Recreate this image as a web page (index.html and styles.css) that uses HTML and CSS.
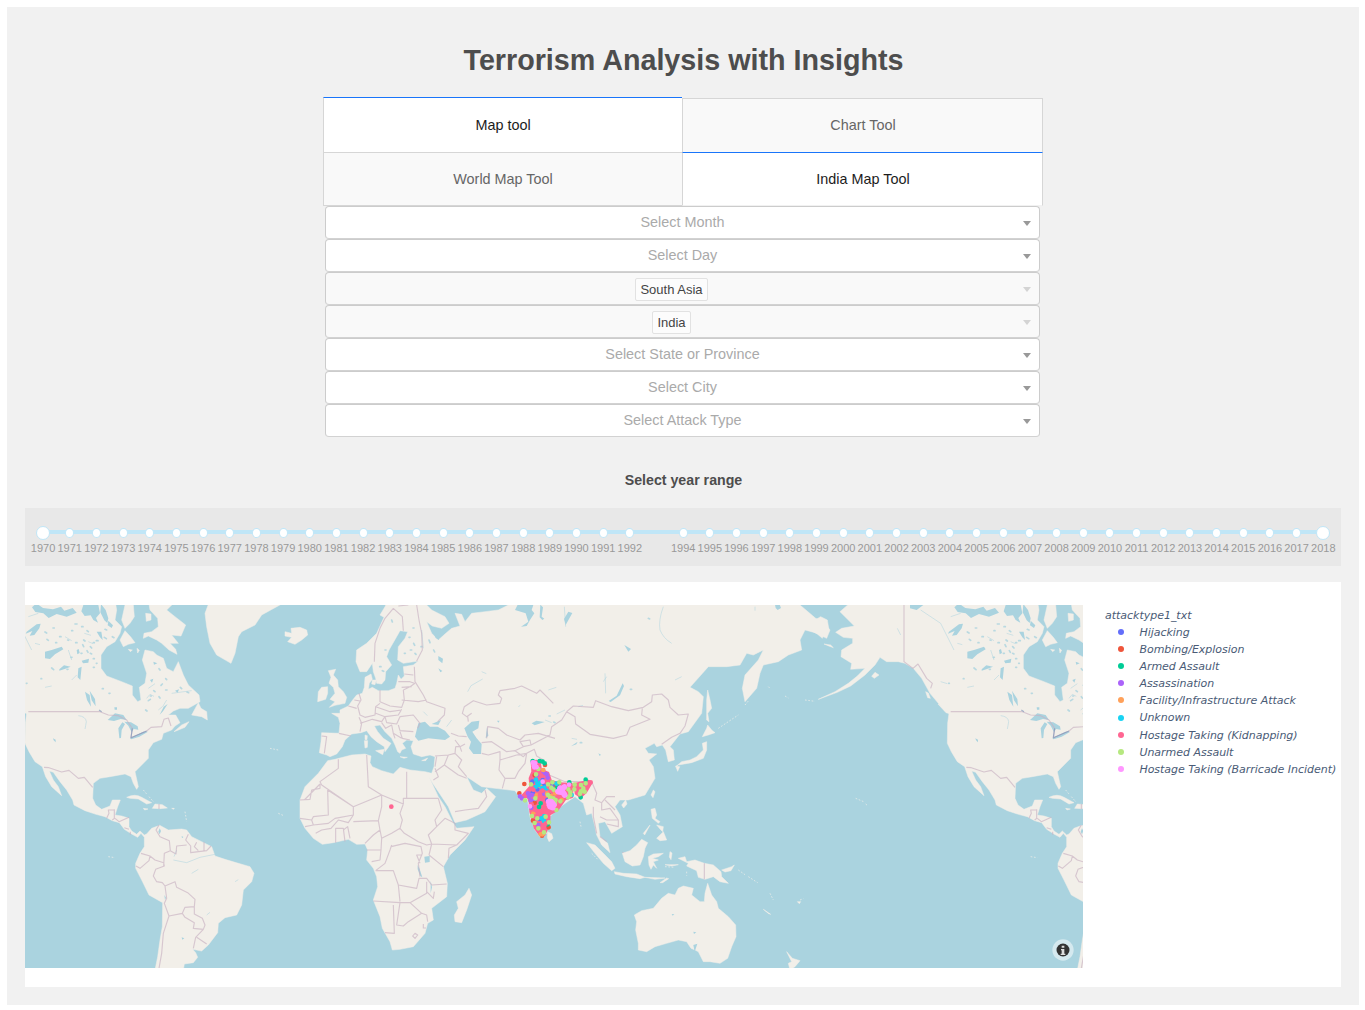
FILE: index.html
```html
<!DOCTYPE html>
<html lang="en">
<head>
<meta charset="utf-8">
<title>Terrorism Analysis with Insights</title>
<link rel="stylesheet" href="styles.css">
</head>
<body>
<main class="page">
  <h1 class="title">Terrorism Analysis with Insights</h1>
  <section class="controls">
    <nav class="tabs">
      <a class="tab selected">Map tool</a><a class="tab">Chart Tool</a>
    </nav>
    <nav class="tabs sub">
      <a class="tab">World Map Tool</a><a class="tab selected">India Map Tool</a>
    </nav>
    <div class="filters">
      <div class="select"><span class="ph">Select Month</span><i class="arrow"></i></div>
      <div class="select"><span class="ph">Select Day</span><i class="arrow"></i></div>
      <div class="select disabled"><span class="chip">South Asia</span><i class="arrow"></i></div>
      <div class="select disabled"><span class="chip">India</span><i class="arrow"></i></div>
      <div class="select"><span class="ph">Select State or Province</span><i class="arrow"></i></div>
      <div class="select"><span class="ph">Select City</span><i class="arrow"></i></div>
      <div class="select"><span class="ph">Select Attack Type</span><i class="arrow"></i></div>
    </div>
  </section>
  <h2 class="range-title">Select year range</h2>
  <div class="slider">
    <div class="mark handle">1970</div><div class="mark">1971</div><div class="mark">1972</div><div class="mark">1973</div><div class="mark">1974</div><div class="mark">1975</div><div class="mark">1976</div><div class="mark">1977</div><div class="mark">1978</div><div class="mark">1979</div>
    <div class="mark">1980</div><div class="mark">1981</div><div class="mark">1982</div><div class="mark">1983</div><div class="mark">1984</div><div class="mark">1985</div><div class="mark">1986</div><div class="mark">1987</div><div class="mark">1988</div><div class="mark">1989</div>
    <div class="mark">1990</div><div class="mark">1991</div><div class="mark">1992</div><div class="gap"></div><div class="mark">1994</div><div class="mark">1995</div><div class="mark">1996</div><div class="mark">1997</div><div class="mark">1998</div><div class="mark">1999</div>
    <div class="mark">2000</div><div class="mark">2001</div><div class="mark">2002</div><div class="mark">2003</div><div class="mark">2004</div><div class="mark">2005</div><div class="mark">2006</div><div class="mark">2007</div><div class="mark">2008</div><div class="mark">2009</div>
    <div class="mark">2010</div><div class="mark">2011</div><div class="mark">2012</div><div class="mark">2013</div><div class="mark">2014</div><div class="mark">2015</div><div class="mark">2016</div><div class="mark">2017</div><div class="mark handle">2018</div>
  </div>
  <section class="graph">
    <svg class="map" viewBox="0 15 3174 1089" preserveAspectRatio="none">
      <defs>
        <g id="americas">
          <path class="land" d="M-299 0L-299 15-322 35-297 60-279 78-317 85-335 97-312 112-284 115-284 130-317 150-319 170-287 190-290 208-247 205-270 228-297 250-337 275-387 298-330 277-290 258-247 225-217 195-202 172-182 185-147 185-127 190-102 205-77 235-52 280-27 310 5 340 1 370 0 430 12 455 30 485 52 500 62 530 80 560 110 587 100 560 85 540 73 513 85 517 105 545 125 570 143 600 147 615 180 632 213 643 240 650 262 662 283 668 298 688 320 702 338 712 348 700 358 712 358 740 345 760 332 790 332 805 350 840 372 885 413 908 412 980 405 1020 398 1070 390 1110 475 1110 478 1092 505 1088 518 1072 512 1058 503 1048 530 1053 550 1035 578 998 580 970 600 953 635 945 650 915 655 870 680 845 687 820 675 800 640 790 600 778 570 768 560 740 530 725 500 710 485 690 470 687 430 690 404 676 380 685 365 702 358 705 345 693 335 703 320 693 312 680 312 655 290 648 270 645 278 620 286 600 262 600 255 618 230 628 212 615 203 595 205 550 225 535 255 530 300 522 318 530 325 550 335 568 340 560 330 515 350 495 370 475 370 450 385 428 410 418 415 400 440 390 450 378 465 368 452 345 430 345 445 333 465 325 490 325 525 305 522 285 490 255 475 225 460 185 445 215 425 205 415 175 395 165 385 155 360 150 352 180 365 220 360 250 343 262 348 300 338 305 322 285 322 258 290 245 245 228 228 205 228 165 245 140 270 125 285 100 290 80 270 60 275 30 270 0Z"/>
          <path class="land" d="M355 115L370 108 395 120 410 130 432 150 456 163 452 148 435 130 460 130 440 105 468 108 482 75 450 50 425 30 440 15 370 0 375 30 398 55 400 80 380 95 357 100ZM285 120L300 92 318 112 330 128 310 133 295 140ZM300 15L325 15 328 50 315 70 300 85 290 60ZM362 40l16 2 0 18-14 4zM310 148l12 2-6 5zM336 145l7 6-5 8zM500 345L520 308 528 325 545 335 547 360 530 350ZM447 395L470 375 492 365 480 382 455 392ZM305 592Q330 580 350 592L380 608 365 612 340 597 315 595ZM382 625L390 612 412 614 427 624 405 626ZM355 625l14 2-10 3zM440 625l8 0-2 3zM555 0L540 40 545 80 555 130 575 165 618 190 630 160 640 110 650 95 690 75 710 45 770 12 780 0ZM-65 275l8 4 6 16-8-2zM-28 312l20 8 18 22-14-4zM-205 225l-12-8-10 12 8 6zM-370 132l20 3 8 8-16-6zM-360 60L-380 50-397 60-415 88-390 102-375 115-367 95-355 90Z"/>
          <g class="lake">
            <path d="M60 155l20-5 30-10 5 8-25 15-15 14-15-2zM5 95l30-22 12-2-4 14-15 20-14 2 8-14-20 8zM103 208l14-12 20 4-16 6-18 6zM180 275l14 10 4 35-12-20zM194 272l16 25 2 22-12-18zM248 360l22-20 25 5 10 15-18-3-20 6zM283 415l-3-30 12-18 8 5-10 18-2 24zM298 365l20 2 20 12 2 10-14-2-6 10-10-20zM315 415l40-20 14 0-26 15-24 8zM268 322l8 0 0 7-7 0zM84 415l8 4 0 8-6-6zM160 205l10-5-4 40-8-8zM155 150l6-3 3 12-7 4zM170 182l22-6-2 12-16 2zM215 95l14 0 4 25-8-8zM34 10l20 14 30 4 24-8 10 12 25-8 12 14-30 12-30-8-24 12-16-14-24-4-10-14zM175 15l45 0 5 25-12 14 6 14-14-8-8-14-18 2-10-14zM228 12l14 18 8 25 -3 14-9-8-12-24zM250 62l14 14-4 8-12-8zM340 240l8-5-2 14zM450 272l12-4-4 10zM404 685l4 8-4 10-4-8zM470 708l5 3-4 4zM418 885l5 8-3 6zM470 1012l8 3-6 4zM385 185l12 5-10 4zM375 240l10-4-4 12zM-112 15l40 0-20 15-20-5zM428 312l-14 22-10 10 12-24z"/>
            <path class="ponds" d="M150 72h6M170 80h4M186 92l4 3M140 92h3M205 128h3M196 140l4 4M186 152l3 5M152 128h4M173 134l3 6M214 122h5M176 120l4 3M196 160l4 2M168 160h3M128 120l3 1M104 110h4M92 128h3M238 112l6 4M262 110l5 3M205 176h3M214 190h2M138 172h3M126 208h3M48 236h2M4 250h2M205 202h3M80 204l6 5M370 302l6-4M386 272l4 3M408 256l4-4M422 270h4M362 330l4 3M376 288h3M402 290l3 4M466 262l4 4M486 276l5 2M422 236l3 3M402 206l3 4M232 266h3M252 280h3M60 96l5 3M84 84h4M66 118l4 3M240 88l5 2"/>
            <path class="fine" d="M130 150l10 30M120 110l20 12M140 240l15-15M10 50l30-10M30 130l15 4M178 100l20 6M190 125l14 6M365 295l10-12 12 6M425 300l-12 20M440 280l60-8M370 265l20-14M400 330l12-10M445 780l40 8 40-16 50-10M500 820l20-12M630 845l10-6M545 945l10-8M455 750l-8 20M160 347q22 2 24 18 -2 12-4 22M-80 30l60 40 40 80M-150 85l10 20M-20 245l20 6M60 262l20-4"/>
          </g>
          <path class="border" d="M-130 15V185L-103 205-88 192-62 235-45 250-50 265M10 335H225L250 345 280 347 305 360 322 385 318 413 365 393 378 382 410 380 417 358 430 354 438 378M57 502L72 503 110 516 132 511 160 535 178 532 203 562M245 655L252 640 250 630 268 630M268 628V655L262 660M270 655L282 665 312 652M298 683L312 688M316 695V704M402 675L393 690 405 710 433 722 436 752 453 762 455 738 485 735M490 703L482 720 497 738 497 758 545 752 558 738M515 727L508 740 520 752M537 725V752M436 752L418 760 416 798M348 760L375 768 372 782 345 805 333 798M375 768L390 780 416 788 418 798 392 808 385 828 395 845 412 848 420 858 450 845 455 862 488 878 510 898 508 920 480 922 472 940M420 858L425 895 418 910 432 948 472 940 480 952 508 968 505 985 535 988 540 975 532 955 508 942V920M432 948L415 1000 410 1060 402 1105M535 988L512 1012 505 1045M515 1012L545 1032M402 612V627"/>
          <path class="border lakeborder" d="M322 385L318 413 365 393M222 330l8 5"/>
          <path class="islets" d="M355 570l10 12M372 590l14 16M480 635l5 30M735 445l25 5M760 640l14 6M250 770l20 3M-275 595l24 10M-245 612l6 5"/>
        </g>
      </defs>
      <rect class="sea" x="0" y="0" width="3174" height="1110"/>
      <g>
        <use href="#americas"/>
        <use href="#americas" x="2767"/>
        <g transform="translate(780 0)">
          <path class="land" d="M310 0L300 20 285 45 297 52 275 100 245 130 215 150 213 185 225 215 245 215 262 190 265 215 272 235 275 250 290 252 300 240 302 215 320 195 305 170 312 150 335 110 345 92 368 95 360 115 340 140 338 180 355 190 400 183 385 195 355 200 358 228 348 238 340 225 335 250 330 265 310 272 280 272 262 262 250 268 253 250 262 238 258 222 240 232 238 262 232 280 215 285 203 300 190 318 165 330 165 340 140 340 160 352 165 370 162 400 110 398 108 425 103 458 125 465 135 470 155 462 172 440 180 420 200 402 228 398 245 392 258 410 275 425 298 440 300 455 310 442 318 430 295 415 278 395 268 378 285 375 300 395 320 415 330 435 338 455 345 460 350 450 362 445 352 430 365 420 385 422 378 440 385 462 410 470 435 465 450 470 447 500 440 520 420 515 375 510 345 502 325 522 290 512 262 500 255 488 258 468 240 462 200 465 150 478 128 482 100 520 60 560 45 600 45 655 60 685 85 715 112 733 145 728 190 718 215 733 240 732 248 750 245 780 265 805 275 830 278 860 265 900 285 950 292 985 315 1025 322 1050 345 1048 385 1040 420 1000 428 970 445 960 440 925 485 890 487 850 475 800 495 765 540 720 567 680 515 685 505 670 480 620 460 590 432 530 442 548 470 590 490 620 510 668 545 660 600 635 632 590 605 565 590 580 565 570 545 530 560 540 590 560 630 565 690 572 710 600 728 600 735 650 750 690 765 710 785 700 795 650 815 628 855 600 870 590 895 610 905 645 920 640 930 680 935 705 950 735 975 758 968 730 945 710 940 670 960 665 980 700 1012 680 1005 645 990 620 1005 600 1030 600 1080 585 1110 535 1105 500 1092 480 1115 462 1090 460 1080 445 1108 430 1115 440 1132 435 1142 450 1150 485 1168 480 1165 450 1155 440 1185 402 1210 395 1250 340 1255 290 1240 275 1215 262 1270 200 1325 200 1365 195 1385 160 1405 165 1435 150 1420 180 1380 225 1372 265 1380 305 1415 265 1425 220 1435 195 1480 185 1510 165 1550 150 1545 120 1560 90 1590 98 1625 115 1635 90 1615 65 1592 55 1545 15 1535 0 690 0 670 15 640 30 600 35 560 40 540 65 530 43 510 40 525 78 500 85 480 102 460 120 440 100 425 65 442 78 470 85 492 70 480 50 440 30 410 0Z"/>
          <path class="land" d="M0 95L20 100 18 85 45 82 65 90 68 105 50 120 30 133 8 125 20 112 0 108ZM130 212L152 208 145 225 158 240 160 260 175 275 185 292 180 310 150 316 133 322 150 305 135 298 150 280 145 262 132 250 138 232ZM100 275L110 262 128 260 128 280 122 298 98 305ZM262 240l12 0-4 14-10-2zM240 405l7 2-1 12-6 0zM238 422l10 0-1 20-7 2zM272 452l26-4-5 16zM345 470l22 2-10 3zM410 482l18-8-6 8zM552 865L560 885 545 930 530 968 510 965 508 945 520 925 515 905 540 885ZM788 695l12 6 4 14-12 10-5-12z"/>
          <g class="lake"><path d="M390 410L400 370 420 365 435 380 458 380 480 392 495 410 480 420 430 415 400 422ZM440 372L468 360 460 375ZM538 385L560 365 583 362 580 385 562 395 575 415 590 432 588 462 565 462 552 445 558 425 548 410ZM700 10L745 15 740 30 748 40 735 60 725 78 708 80 730 65 722 40 690 30ZM766 14l8 8-4 28 8 6-6 4-8-8zM418 770l16-2 0 18-14 2zM398 795l6 12 8 25-6-4-8-20zM437 842l4 20-4 18zM358 430l18-8 6 5-16 6zM440 85l14 10 8 25-10-6zM460 168l14 8-2 14-12-10zM460 205l12 8-6 4zM740 370l14-8 25 4-30 10zM606 380l-4 35 8-8zM636 362l8 0-4 6zM1013 250l4 8-12 28-28 20-6-3 24-16zM1018 135l20 12-8 8zM850 35l12 4-20 36-5 -18zM878 425l-20 14 16-6zM940 460l8 4-4 4zM1470 14l14 0 4 10-10 6-6-6z"/>
            <path class="ponds" d="M386 130l3 6M376 150h4M390 160l3 3M372 112h3M432 120l3 8M446 150l3 6M320 60l2 6M300 150h3M284 200h4M292 212l4 2M384 84h3M358 160h3M408 140h3M1090 55l4 2M1036 268h4M792 348h4M886 428h4M806 366l4 2"/>
            <path class="fine" d="M410 90l5 55M548 275l10-18 35-20M500 360l-15 20M415 335l12 12M1135 20q-15 40-10 70 10 25 35 40M838 20l4 60M960 220l2 60M965 230l-10 15M790 270l24-8M1190 230l-20 10M840 330l-25 12M780 360l20 8M880 320l14-4M590 215l14 6M700 320l6-4M1410 20v12M860 415l16 3"/>
          </g>
          <path class="border" d="M325 25L300 55 285 85 270 130 268 185M325 25L352 50 355 92M340 18L370 15M395 15L402 60 410 100 412 150 395 183M388 200L390 245 415 285 425 305 480 325 478 345 458 365M358 222L385 225M340 245L375 245 388 250M350 262L380 260M355 270L375 260 390 250M285 270V305L315 318 350 322 358 300 355 270M350 300L400 305 425 300M222 280L228 300 218 318 225 345 240 352 270 345 272 320 285 310M190 318L215 325M208 300L225 303M222 352L230 370 225 395M225 370L240 365 262 358 290 365 300 350 272 340M272 320L315 335 350 330M300 350L340 345 350 328M300 350L305 368 335 372 345 350 385 345 405 370 398 385M340 375L345 392 385 395M290 368L302 385 320 375 325 400 330 415M345 395L352 415 375 420M325 400L350 415M110 408L125 410 118 460M162 400L198 408M498 400L520 408 545 410M510 420L525 440 540 432M512 440H525L530 455M455 470L450 500M450 468L490 465 510 460 512 440M490 465L478 495 450 515M450 505L460 530 445 540M510 460L530 480 520 500 545 530M478 495L520 525 545 535M590 460L610 465 645 455 645 480 642 510 660 535 652 565M560 340L545 350 532 340 538 320 565 302 605 315 645 310 650 295 640 285 645 272 690 265 710 258 730 268 755 280 765 270 785 290 805 310M548 350L550 365M605 415L608 380 640 385 665 405 705 420 720 405 760 400 810 415M590 428L620 425 665 455 690 452M690 452L715 440 705 425 735 420 738 435 715 440M738 435L795 405 800 380 830 360 845 335M690 452L715 470 725 460 748 448 755 468 775 480M645 480L695 465 725 460 720 490 700 515 690 535 660 535M510 635L540 630 580 625 605 590 600 570M105 552L58 600M160 478L160 505 105 545 110 555M245 465L248 520 250 560 290 585M110 555L205 620 290 585 355 612M365 515V595H355V612M365 595H460M45 600L75 598 80 570 105 565V552M128 570L130 645 85 650 80 660M45 655L80 660 85 675 60 680M128 570L205 620 205 645 150 655 130 670 85 675M205 645L190 668 160 660 138 685 110 690 92 700M152 728V685L175 685 180 725M175 690L188 680 195 715M205 665L280 662 290 620 290 585M280 662L285 690 265 705 240 730M285 690L290 715 320 700 345 685 352 660 345 640 355 612M345 685L358 700 400 725 425 735 440 732 430 705 455 680 450 660 470 630 460 595M455 680L480 655 510 670 510 690 550 700 515 735 440 732M515 735L492 745 490 775M320 700L290 715 288 750 245 750M288 750L285 780 260 785M320 735L315 750 300 790 272 812M318 740L360 730 408 740 412 760 400 790 405 830M440 732L432 765M412 765H395L405 790M432 765L475 800M272 812H325L340 855 395 865 402 835 425 835 440 855 485 852M340 855L345 905M265 903L345 908 375 908 425 880 425 845M425 875L445 895 448 875M345 908L335 975 355 978 370 965 410 940 425 945 428 965M375 908L410 940M325 915L328 1000 300 998M390 1000L398 1005 390 1015 383 1008ZM415 972v12h8M845 335L865 318 925 322 932 302 980 320 1030 332 1075 322 1100 305 1102 285 1130 282 1150 300 1155 322 1180 345 1210 342 1200 378 1185 400 1160 412 1130 433M845 335L870 350 872 372 915 403 985 415 1025 405 1035 382 1095 358 1070 345 1072 325M780 520L840 545 920 545 935 580 930 600 950 608 965 590 990 590M925 620L925 650 935 700M950 608L950 630 975 625 1000 660 1000 680 965 672M960 600L990 630M945 650L965 660 1000 660M945 710L965 725M1012 757L1035 762 1070 735 1085 738"/>
        </g>
        <g transform="translate(1560 0)">
          <path class="land" d="M125 728L150 735 175 760 200 785 210 805 200 812 175 790 150 760ZM208 815L235 820 275 822 300 832 285 836 245 830 210 822ZM300 832l60 2-30 4zM345 848l20-14 6 2-18 12zM232 760L255 752 275 735 290 718 308 728 300 745 295 770 285 795 262 798 240 785ZM310 770L325 762 355 760 340 770 322 775 340 780 325 785 335 805 325 795 318 808 312 795ZM375 755l6 4-3 20-5-8zM360 794l40 0-20 4zM400 775L420 770 425 785 450 780 478 790 505 795 528 815 530 830 550 850 525 845 505 830 480 838 460 832 455 812 425 798 430 790ZM530 810L560 800 568 795 558 812 540 816ZM392 500L410 485 435 480 455 470 475 450 472 430 485 425 485 450 475 475 440 488 400 495ZM392 498l12 2-6 14zM472 410L485 385 488 375 500 390 510 398 490 405ZM488 270L495 300 500 325 488 340 492 365 485 360 485 300ZM325 570l5 5-6 18-6-8zM230 615l12-15 4 12-10 12zM318 628L330 625 335 645 330 655 345 665 340 670 322 655ZM335 715L355 695 365 720 345 722ZM335 675l20 5-2 15-8-8zM295 700l20-25-16 30zM268 945L290 932 325 925 350 895 370 880 390 885 400 865 415 858 445 865 440 885 465 905 478 905 480 880 488 850 500 885 515 905 520 925 550 950 572 975 573 1010 560 1040 548 1075 525 1090 495 1085 475 1085 460 1055 450 1050 438 1045 425 1025 400 1020 365 1030 330 1040 305 1055 280 1050 280 1030 272 990 275 965ZM725 1055L742 1075 765 1082 750 1100 735 1110 730 1090 740 1085ZM655 928l22 15-6-2zM757 905l10 0-4 6z"/>
          <path class="lake" d="M380 942l8 1-5 4zM445 995l9 2-7 5zM445 1035l12-4-8 25zM335 975l4 2z"/>
          <path class="border" d="M478 790V838"/>
          <path class="islets" d="M520 385l60-40M670 260l4 4M720 288l10 6M780 300l30 4M580 810l20 14M610 830l28 18M675 880l10 20M765 900l10-4M105 665l4 20M140 760l20 20M360 800l30 2M425 815v12M600 315l10 -12"/>
        </g>
      </g>
      <g class="points" transform="translate(1425 435)">
        <path class="mass" d="M96 50L110 48 119 56 122 75 144 84 152 108 180 116 215 118 216 155 195 162 172 194 148 208 146 240 132 270 118 266 105 248 92 200 90 170 84 156 66 154 92 125 90 100 98 80ZM225 118L265 108 273 114 258 140 242 155 228 145Z"/>
        <path class="hijack" d="M97 110h0M128 105h0M157 122h0M98 143h0M132 122h0M112 133h0M142 165h0M118 222h0"/>
        <path class="bomb" d="M73 117h0M58 145h0M135 60h0M126 272h0M146 247h0M104 91h0M168 119h0M104 173h0M99 227h0"/>
        <path class="armed" d="M98 48h0M119 48h0M128 50h0M134 55h0M208 112h0M257 104h0M242 157h0M122 175h0M117 186h0M148 152h0M176 115h0M151 178h0M143 238h0M170 130h0"/>
        <path class="assn" d="M131 83h0M140 88h0M143 98h0M60 154h0M66 160h0M88 155h0M96 150h0M84 145h0M92 167h0M94 188h0M117 111h0M110 90h0M104 162h0M132 146h0M115 240h0"/>
        <path class="facility" d="M121 123h0M141 146h0M153 153h0M122 268h0M128 268h0M100 206h0M110 151h0M130 75h0M165 145h0M185 165h0"/>
        <path class="unknown" d="M108 104h0M115 120h0M125 130h0M134 128h0M107 126h0M123 112h0M112 115h0M125 220h0M132 228h0M133 213h0M169 116h0M215 150h0M140 130h0"/>
        <path class="kidnap" d="M124 92h0M112 82h0M135 109h0M127 137h0M100 134h0M146 125h0M272 112h0M260 118h0M238 148h0M232 140h0M225 122h0M140 190h0M130 200h0M120 204h0M95 178h0M150 200h0M166 184h0M120 150h0M106 195h0M137 236h0M105 215h0"/>
        <path class="unarmed" d="M115 72h0M108 88h0M93 118h0M75 166h0M144 118h0M157 112h0M154 128h0M161 134h0M178 112h0M205 133h0M211 150h0M204 157h0M211 142h0M224 119h0M223 133h0M243 120h0M257 115h0M250 130h0M243 139h0M254 140h0M240 146h0M167 165h0M181 169h0M165 175h0M169 195h0M144 150h0M160 160h0M106 160h0M96 213h0M104 234h0M112 220h0M137 215h0M147 232h0M132 262h0M115 250h0M150 158h0"/>
        <path class="barricade" d="M98 52h0M106 55h0M102 64h0M110 66h0M128 110h0M90 184h0M207 119h0"/>
        <path class="barricade cluster" d="M102 54L104 66M193 126L184 133 174 140 188 142 194 150M180 130L192 146M146 170L154 170 162 180 150 185 158 188 148 180"/>
        <path class="kidnap" d="M-326 185h0"/>
      </g>
      <g class="attrib"><circle class="halo" cx="3114" cy="1050" r="32"/><circle class="disc" cx="3114" cy="1050" r="19.5"/><path class="glyph" d="M3110 1037h8v6h-8zM3108 1047h10v14h3v4h-14v-4h3v-10h-2z"/></g>
    </svg>
    <div class="legend">
      <div class="legend-title">attacktype1_txt</div>
      <div class="item"><i class="dot c1"></i>Hijacking</div>
      <div class="item"><i class="dot c2"></i>Bombing/Explosion</div>
      <div class="item"><i class="dot c3"></i>Armed Assault</div>
      <div class="item"><i class="dot c4"></i>Assassination</div>
      <div class="item"><i class="dot c5"></i>Facility/Infrastructure Attack</div>
      <div class="item"><i class="dot c6"></i>Unknown</div>
      <div class="item"><i class="dot c7"></i>Hostage Taking (Kidnapping)</div>
      <div class="item"><i class="dot c8"></i>Unarmed Assault</div>
      <div class="item"><i class="dot c9"></i>Hostage Taking (Barricade Incident)</div>
    </div>
  </section>
</main>
</body>
</html>
```

FILE: styles.css
```css
* { box-sizing: border-box; }
body { margin: 7px 6px 5px 7px; background: #fff; color: #4d4d4d; font-family: "Liberation Sans", Arial, sans-serif; }
.page { height: 998px; padding: 34px 18px 0; background: #f1f1f1; overflow: hidden; }
.title { margin: 0; height: 56px; padding-left: 1px; font-size: 28.7px; line-height: 38px; font-weight: 700; text-align: center; }
.controls { width: 720px; margin: 0 auto; }
.tabs { display: flex; height: 55px; }
.tabs.sub { height: 54px; }
.tab { flex: 1; display: flex; align-items: center; justify-content: center; margin-top: 1px; padding: 0 0 1px; border: 1px solid #d6d6d6; border-right: 0; border-bottom: 0; background: #f9f9f9; color: #666; font-size: 14.4px; }
.tab:last-child { border-right: 1px solid #d6d6d6; padding-left: 1px; }
.tab.selected { margin-top: 0; padding-bottom: 0; border-top-color: #1975fa; background: #fff; color: #1c1c1c; }
.sub .tab { margin-top: 0; padding-bottom: 0; border-bottom: 1px solid #d6d6d6; }
.sub .tab.selected { border-bottom-color: #f1f1f1; border-left-color: #d6d6d6; }
.filters { width: 715px; margin-left: 2px; }
.select { display: grid; grid-template-columns: 26px 1fr 26px; align-items: center; height: 33px; border: 1px solid #ccc; border-bottom-color: #d2d2d2; border-radius: 4px; background: #fff; text-align: center; }
.select.disabled { background: #f9f9f9; }
.ph { grid-column: 2; color: #aaa; font-size: 14.4px; line-height: 31px; }
.chip { grid-column: 2; justify-self: center; height: 23px; margin: 2px 22px 0 0; padding: 0 4.5px; border: 1px solid #e2e2e2; border-radius: 2px; background: #fcfcfc; color: #444; font-size: 13px; line-height: 22px; }
.arrow { justify-self: center; width: 0; border: solid transparent; border-width: 5px 4.5px 0; border-top-color: #999; margin: 2px 0 0 1px; }
.disabled .arrow { border-top-color: #d4d4d4; }
.range-title { margin: 34px 0 0; height: 37px; padding-left: 1px; text-align: center; font-size: 14.2px; line-height: 19px; }
.slider { display: flex; height: 58px; padding: 19px 4.7px 0; background: linear-gradient(#c0e6f7, #c0e6f7) 18px 22px / 1280px 4px no-repeat, #e8e8e8; }
.mark, .gap { flex: 1 1 0; min-width: 0; }
.mark { display: flex; flex-direction: column; align-items: center; color: #999; font-size: 11px; line-height: 14px; }
.mark::before { content: ""; width: 7px; height: 8px; margin: 1px 0 3px; border: 1px solid #c0e6f7; border-radius: 50%; background: #fff; flex: none; }
.mark.handle::before { width: 12px; height: 12px; margin: -1px 0 1px; }
.graph { display: flex; height: 405px; margin-top: 16px; padding-top: 23px; background: #fff; }
.map { display: block; flex: none; width: 1058px; height: 363px; }
.sea { fill: #aad3df; }
.land { fill: #f2efe9; stroke: #f2efe9; stroke-width: 1.5; stroke-linejoin: round; }
.lake { fill: #aad3df; }
.ponds { fill: none; stroke: #aad3df; stroke-width: 5; stroke-linecap: round; opacity: .8; }
.fine { fill: none; stroke: #aad3df; stroke-width: 2.5; opacity: .6; }
.islets { fill: none; stroke: #f2efe9; stroke-width: 3; stroke-dasharray: 5 5; opacity: .7; }
.border { fill: none; stroke: #c7b0c1; stroke-width: 3.4; stroke-linejoin: round; opacity: .65; }
.lakeborder { stroke: #7992b8; }
.points path { fill: none; stroke-width: 14; stroke-linecap: round; stroke-linejoin: round; }
.points .mass { fill: #ff6692; stroke: #ff6692; stroke-width: 8; }
.hijack { stroke: #636efa; } .bomb { stroke: #ef553b; } .armed { stroke: #00cc96; }
.assn { stroke: #ab63fa; } .facility { stroke: #ffa15a; } .unknown { stroke: #19d3f3; }
.kidnap { stroke: #ff6692; } .unarmed { stroke: #b6e880; } .barricade { stroke: #ff97ff; }
.points .cluster { stroke-width: 17; }
.halo { fill: #fff; opacity: .5; }
.disc { fill: #333; }
.glyph { fill: #ddd; }
.legend { margin: 2px 0 0 22px; color: #4a5b76; font: italic 11px/17.1px "DejaVu Sans", Verdana, sans-serif; letter-spacing: -0.02px; white-space: nowrap; }
.legend-title { line-height: 17px; }
.item { display: flex; align-items: center; }
.dot { width: 6px; height: 6px; margin: -1px 15px 0 13.4px; border-radius: 50%; }
.c1 { background: #636efa; } .c2 { background: #ef553b; } .c3 { background: #00cc96; }
.c4 { background: #ab63fa; } .c5 { background: #ffa15a; } .c6 { background: #19d3f3; }
.c7 { background: #ff6692; } .c8 { background: #b6e880; } .c9 { background: #ff97ff; }
```
